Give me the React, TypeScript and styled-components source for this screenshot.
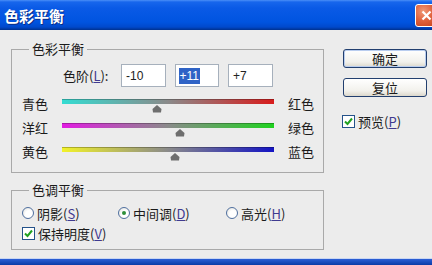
import React from "react";
import styled, { createGlobalStyle } from "styled-components";

const GlobalStyle = createGlobalStyle`
  html, body {
    margin: 0;
    padding: 0;
    background: #ececec;
  }
  body {
    font-family: "Noto Sans CJK SC", "Noto Sans", sans-serif;
    font-size: 13px;
    color: #1b1b1b;
  }
`;

const Window = styled.div`
  width: 432px;
  height: 265px;
  display: flex;
  flex-direction: column;
  background: #ececec;
  overflow: hidden;
`;

const TitleBar = styled.div`
  height: 30px;
  flex: none;
  box-sizing: border-box;
  display: flex;
  align-items: center;
  justify-content: space-between;
  padding-left: 4px;
  background: linear-gradient(
    #4a8ff7 0,
    #1766ec 2px,
    #0a5ae6 8px,
    #0054e0 22px,
    #0049cc 27px,
    #00318f 30px
  );
`;

const Title = styled.span`
  color: #fff;
  font-weight: 700;
  font-size: 15px;
  line-height: 18px;
  padding-top: 2px;
  text-shadow: 1px 1px 0 #0b2e86;
`;

const CloseButton = styled.div`
  width: 21px;
  height: 21px;
  margin-right: -6px;
  border: 1px solid #fff;
  border-radius: 3px;
  background: radial-gradient(circle at 35% 30%, #f09a78 0, #e1643f 45%, #c43d17 100%);
  display: flex;
  align-items: center;
  justify-content: center;
`;

const Body = styled.div`
  flex: 1;
  display: flex;
  gap: 19px;
  padding: 10px 0 0 11px;
`;

const LeftColumn = styled.div`
  width: 313px;
  display: flex;
  flex-direction: column;
  gap: 8px;
`;

const Group = styled.fieldset<{ $height: number }>`
  margin: 0;
  padding: 0;
  min-width: 0;
  height: ${({ $height }) => $height}px;
  box-sizing: border-box;
  border: 1px solid #a9a9a9;
`;

const Legend = styled.legend`
  margin-left: 17px;
  padding: 0 3px;
  line-height: 18px;
  font-size: 13px;
`;

const LevelsRow = styled.div`
  display: flex;
  align-items: center;
  height: 23px;
  margin-top: 6px;
  padding-left: 51px;
`;

const LevelsLabel = styled.span`
  width: 47px;
  margin-right: 11px;
  white-space: nowrap;
`;

const Fields = styled.div`
  display: flex;
  gap: 9px;
`;

const Field = styled.div`
  width: 44.5px;
  height: 23px;
  box-sizing: border-box;
  border: 1px solid #a6b0bc;
  background: #fff;
  padding-left: 3px;
  display: flex;
  align-items: center;
  font: 12px "Liberation Sans", Arial, sans-serif;
  color: #222;
`;

const FieldText = styled.span<{ $selected?: boolean }>`
  padding: 1px 1px;
  background: ${({ $selected }) => ($selected ? "#2f63c6" : "transparent")};
  color: ${({ $selected }) => ($selected ? "#fff" : "#222")};
`;

const Sliders = styled.div`
  margin-top: 5px;
  display: flex;
  flex-direction: column;
`;

const SliderRow = styled.div`
  display: flex;
  align-items: flex-start;
  height: 24px;
  padding-left: 10px;
`;

const SideLabel = styled.span`
  width: 40px;
  line-height: 24px;
`;

const TrackArea = styled.div`
  position: relative;
  width: 212px;
  height: 24px;
`;

const Track = styled.div<{ $from: string; $to: string }>`
  margin-top: 7px;
  height: 5px;
  background: linear-gradient(
    to right,
    ${({ $from }) => $from},
    #8a8a8a 50%,
    ${({ $to }) => $to}
  );
  box-shadow: inset 0 1px 0 rgba(0, 0, 0, 0.25);
`;

const Thumb = styled.svg`
  position: absolute;
  top: 13px;
  width: 10px;
  height: 8px;
  margin-left: -5px;
`;

const EndLabel = styled.span`
  margin-left: 14px;
  line-height: 24px;
`;

const RadioRow = styled.div`
  display: flex;
  align-items: center;
  height: 20px;
  margin-top: 4px;
  padding-left: 10px;
`;

const Option = styled.label<{ $width?: number }>`
  display: flex;
  align-items: center;
  gap: 3px;
  width: ${({ $width }) => ($width ? `${$width}px` : "auto")};
  height: 20px;
`;

const RadioCircle = styled.span<{ $checked?: boolean }>`
  width: 12px;
  height: 12px;
  box-sizing: border-box;
  border-radius: 50%;
  border: 1px solid #4f6f9f;
  background: radial-gradient(circle at 60% 60%, #ffffff 40%, #dcdcd6 100%);
  display: flex;
  align-items: center;
  justify-content: center;

  &::after {
    content: "";
    width: 4px;
    height: 4px;
    border-radius: 50%;
    background: ${({ $checked }) => ($checked ? "#2f8f3a" : "transparent")};
  }
`;

const CheckRow = styled.div`
  display: flex;
  align-items: center;
  height: 20px;
  padding-left: 10px;
`;

const CheckBox = styled.span`
  width: 13px;
  height: 13px;
  box-sizing: border-box;
  border: 1px solid #24528a;
  background: #fff;
  display: flex;
  align-items: center;
  justify-content: center;
`;

const Key = styled.span`
  color: #3f3a90;
  text-decoration: underline;
`;

const RightColumn = styled.div`
  width: 84px;
  padding-top: 9px;
  display: flex;
  flex-direction: column;
`;

const Button = styled.div<{ $primary?: boolean }>`
  height: 19px;
  box-sizing: border-box;
  margin-bottom: 10px;
  border: 1px solid #223f6f;
  border-radius: 3px;
  background: linear-gradient(#ffffff, #f2f1ec 70%, #dcd8cc);
  box-shadow: ${({ $primary }) =>
    $primary ? "inset 0 0 0 1px #b9cdef" : "none"};
  display: flex;
  align-items: center;
  justify-content: center;
  font-size: 13px;
  line-height: 17px;
`;

const PreviewRow = styled.label`
  display: flex;
  align-items: center;
  gap: 3px;
  height: 13px;
  margin-top: 8px;
  margin-left: -1px;
`;

const BottomFrame = styled.div`
  height: 7px;
  flex: none;
  box-sizing: border-box;
  border-top: 1px solid #c9d6f2;
  background: linear-gradient(#2c5fd6, #0b3ba6);
`;

type SliderDef = {
  left: string;
  right: string;
  from: string;
  to: string;
  value: number;
};

const sliders: SliderDef[] = [
  { left: "青色", right: "红色", from: "#34dcd2", to: "#d81c1c", value: -10 },
  { left: "洋红", right: "绿色", from: "#e21ce2", to: "#1fd21f", value: 11 },
  { left: "黄色", right: "蓝色", from: "#f2f22a", to: "#1414c4", value: 7 },
];

const Check = () => (
  <svg width="9" height="9" viewBox="0 0 9 9">
    <path d="M1 4.5 L3.5 7 L8 1.5" fill="none" stroke="#21a121" strokeWidth="2" />
  </svg>
);

export default function App() {
  return (
    <>
      <GlobalStyle />
      <Window>
        <TitleBar>
          <Title>色彩平衡</Title>
          <CloseButton>
            <svg width="11" height="11" viewBox="0 0 11 11">
              <path d="M1.5 1.5 L9.5 9.5 M9.5 1.5 L1.5 9.5" stroke="#fff" strokeWidth="2.2" />
            </svg>
          </CloseButton>
        </TitleBar>
        <Body>
          <LeftColumn>
            <Group $height={133}>
              <Legend>色彩平衡</Legend>
              <LevelsRow>
                <LevelsLabel>
                  色阶(<Key>L</Key>):
                </LevelsLabel>
                <Fields>
                  <Field>
                    <FieldText>-10</FieldText>
                  </Field>
                  <Field>
                    <FieldText $selected>+11</FieldText>
                  </Field>
                  <Field>
                    <FieldText>+7</FieldText>
                  </Field>
                </Fields>
              </LevelsRow>
              <Sliders>
                {sliders.map((s) => (
                  <SliderRow key={s.left}>
                    <SideLabel>{s.left}</SideLabel>
                    <TrackArea>
                      <Track $from={s.from} $to={s.to} />
                      <Thumb
                        viewBox="0 0 10 8"
                        style={{ left: `${((s.value + 100) / 200) * 100}%` }}
                      >
                        <path d="M5 0 L9.5 4 L9 7.5 L1 7.5 L0.5 4 Z" fill="#6e6e6e" />
                      </Thumb>
                    </TrackArea>
                    <EndLabel>{s.right}</EndLabel>
                  </SliderRow>
                ))}
              </Sliders>
            </Group>
            <Group $height={69}>
              <Legend>色调平衡</Legend>
              <RadioRow>
                <Option $width={96}>
                  <RadioCircle />
                  <span>
                    阴影(<Key>S</Key>)
                  </span>
                </Option>
                <Option $width={108}>
                  <RadioCircle $checked />
                  <span>
                    中间调(<Key>D</Key>)
                  </span>
                </Option>
                <Option>
                  <RadioCircle />
                  <span>
                    高光(<Key>H</Key>)
                  </span>
                </Option>
              </RadioRow>
              <CheckRow>
                <Option>
                  <CheckBox>
                    <Check />
                  </CheckBox>
                  <span>
                    保持明度(<Key>V</Key>)
                  </span>
                </Option>
              </CheckRow>
            </Group>
          </LeftColumn>
          <RightColumn>
            <Button $primary>确定</Button>
            <Button>复位</Button>
            <PreviewRow>
              <CheckBox>
                <Check />
              </CheckBox>
              <span>
                预览(<Key>P</Key>)
              </span>
            </PreviewRow>
          </RightColumn>
        </Body>
        <BottomFrame />
      </Window>
    </>
  );
}
